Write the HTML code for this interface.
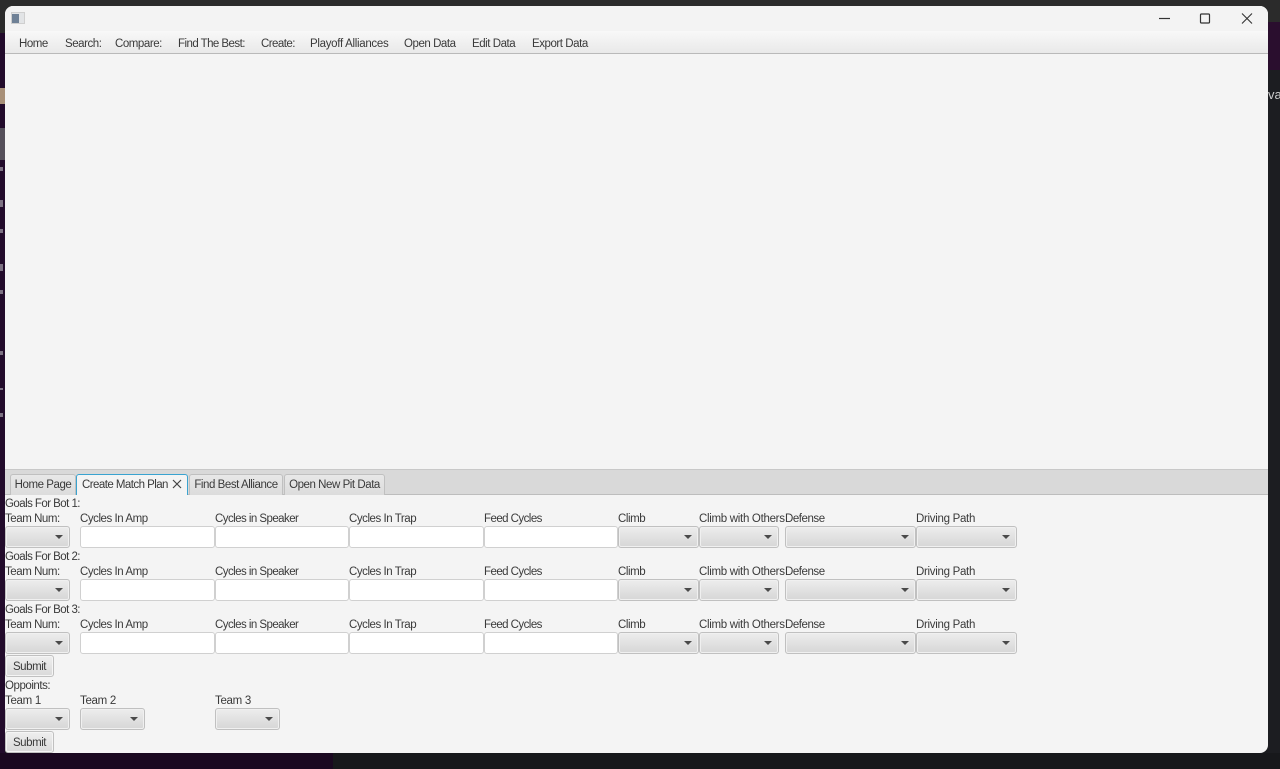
<!DOCTYPE html>
<html><head><meta charset="utf-8"><style>
html,body{margin:0;padding:0;width:1280px;height:769px;overflow:hidden;background:#1b1c20;font-family:"Liberation Sans",sans-serif;font-size:11.5px;letter-spacing:-.45px;color:#3a3a3a}
div{position:absolute;box-sizing:border-box}
.t{white-space:nowrap;line-height:14px;height:14px;margin-top:1px}
.w{letter-spacing:-.3px}
.n{letter-spacing:-.55px}
.c{height:22px;border:1px solid #c0c0c0;border-radius:3px;background:linear-gradient(#ededed,#d6d6d6);box-shadow:inset 0 0 0 1px #f0f0f0}
.c:after{content:"";position:absolute;right:6px;top:8px;border-left:4px solid transparent;border-right:4px solid transparent;border-top:4px solid #4a4a4a}
.f{height:22px;border:1px solid #d0d0d0;border-radius:3px;background:#fff}
.b{height:22px;border:1px solid #c0c0c0;border-radius:3px;background:linear-gradient(#efefef,#d9d9d9);box-shadow:inset 0 0 0 1px #f5f5f5;text-align:center;line-height:22px;width:49px;left:5px}
.tab{top:474px;height:21px;border:1px solid #c0c0c0;border-bottom:none;border-radius:3px 3px 0 0;background:linear-gradient(#e8e8e8,#dcdcdc);line-height:21px;text-align:center;white-space:nowrap}
.s{left:0;width:3px;height:4px;background:#7d7283}
</style></head><body>
<div style="left:0;top:0;width:1280px;height:33px;background:#2b2b2b"></div>
<div style="left:0;top:33px;width:5px;height:736px;background:#220b2b"></div>
<div style="left:0;top:88px;width:5px;height:16px;background:#a89078"></div>
<div style="left:0;top:128px;width:5px;height:32px;background:#55505a"></div>
<div class="s" style="top:167px"></div>
<div class="s" style="top:200px;height:7px"></div>
<div class="s" style="top:229px"></div>
<div class="s" style="top:264px;height:7px"></div>
<div class="s" style="top:290px"></div>
<div class="s" style="top:351px"></div>
<div class="s" style="top:388px;height:2px"></div>
<div class="s" style="top:413px"></div>
<div style="left:1268px;top:22px;width:12px;height:48px;background:#2a0e2e"></div>
<div style="left:1268px;top:70px;width:12px;height:699px;background:#1c1d21"></div>
<div class="t" style="left:1268px;top:87px;color:#ccc;font-size:13px;letter-spacing:0">va</div>
<div style="left:0;top:753px;width:333px;height:16px;background:#1a0820"></div>
<div style="left:333px;top:753px;width:947px;height:16px;background:#17181b"></div>

<div style="left:5px;top:6px;width:1263px;height:747px;background:#f4f4f4;border-radius:8px;overflow:hidden">
<div style="left:0;top:0;width:1263px;height:25px;background:#f3f3f3"></div>
<div style="left:0;top:25px;width:1263px;height:23px;background:linear-gradient(#f8f8f8,#e9e9e9);border-bottom:1px solid #b9b9b9"></div>
<div style="left:0;top:463px;width:1263px;height:26px;background:#d9d9d9;border-top:1px solid #c8c8c8;border-bottom:1px solid #bdbdbd"></div>
</div>

<div style="left:11px;top:12px;width:14px;height:12px;background:#e2e4e6;border:1px solid #cfcfcf"></div>
<div style="left:12px;top:14px;width:7px;height:9px;background:#6f8196"></div>
<svg style="position:absolute;left:1150px;top:6px" width="118" height="25" fill="none" stroke="#333">
<path d="M9 12.5H20" stroke-width="1.2"/>
<rect x="50.5" y="8" width="9" height="9" rx="1" stroke-width="1.2"/>
<path d="M92 7.5L102 17.5M102 7.5L92 17.5" stroke-width="1.1"/>
</svg>

<div class="t" style="left:19px;top:36px">Home</div>
<div class="t" style="left:65px;top:36px">Search:</div>
<div class="t" style="left:115px;top:36px">Compare:</div>
<div class="t n" style="left:178px;top:36px">Find The Best:</div>
<div class="t n" style="left:261px;top:36px">Create:</div>
<div class="t w" style="left:310px;top:36px">Playoff Alliances</div>
<div class="t" style="left:404px;top:36px">Open Data</div>
<div class="t" style="left:472px;top:36px">Edit Data</div>
<div class="t" style="left:532px;top:36px">Export Data</div>

<div class="tab" style="left:10px;width:66px">Home Page</div>
<div class="tab n" style="left:76px;width:112px;background:#f4f4f4;border:1px solid #3aa3d0;border-bottom:none;text-align:left;padding-left:5px">Create Match Plan</div>
<svg style="position:absolute;left:172px;top:479px" width="10" height="10" fill="none" stroke="#444" stroke-width="1.2"><path d="M1 1L9 9M9 1L1 9"/></svg>
<div class="tab" style="left:189px;width:94px">Find Best Alliance</div>
<div class="tab" style="left:284px;width:101px">Open New Pit Data</div>

<div class="t n" style="left:5px;top:496px">Goals For Bot 1:</div>
<div class="t" style="left:5px;top:511px">Team Num:</div>
<div class="t" style="left:80px;top:511px">Cycles In Amp</div>
<div class="t n" style="left:215px;top:511px">Cycles in Speaker</div>
<div class="t" style="left:349px;top:511px">Cycles In Trap</div>
<div class="t n" style="left:484px;top:511px">Feed Cycles</div>
<div class="t" style="left:618px;top:511px">Climb</div>
<div class="t w" style="left:699px;top:511px">Climb with Others</div>
<div class="t" style="left:785px;top:511px">Defense</div>
<div class="t w" style="left:916px;top:511px">Driving Path</div>
<div class="c" style="left:5px;top:526px;width:65px"></div>
<div class="f" style="left:80px;top:526px;width:135px"></div>
<div class="f" style="left:215px;top:526px;width:134px"></div>
<div class="f" style="left:349px;top:526px;width:135px"></div>
<div class="f" style="left:484px;top:526px;width:134px"></div>
<div class="c" style="left:618px;top:526px;width:81px"></div>
<div class="c" style="left:699px;top:526px;width:80px"></div>
<div class="c" style="left:785px;top:526px;width:131px"></div>
<div class="c" style="left:916px;top:526px;width:101px"></div>

<div class="t n" style="left:5px;top:549px">Goals For Bot 2:</div>
<div class="t" style="left:5px;top:564px">Team Num:</div>
<div class="t" style="left:80px;top:564px">Cycles In Amp</div>
<div class="t n" style="left:215px;top:564px">Cycles in Speaker</div>
<div class="t" style="left:349px;top:564px">Cycles In Trap</div>
<div class="t n" style="left:484px;top:564px">Feed Cycles</div>
<div class="t" style="left:618px;top:564px">Climb</div>
<div class="t w" style="left:699px;top:564px">Climb with Others</div>
<div class="t" style="left:785px;top:564px">Defense</div>
<div class="t w" style="left:916px;top:564px">Driving Path</div>
<div class="c" style="left:5px;top:579px;width:65px"></div>
<div class="f" style="left:80px;top:579px;width:135px"></div>
<div class="f" style="left:215px;top:579px;width:134px"></div>
<div class="f" style="left:349px;top:579px;width:135px"></div>
<div class="f" style="left:484px;top:579px;width:134px"></div>
<div class="c" style="left:618px;top:579px;width:81px"></div>
<div class="c" style="left:699px;top:579px;width:80px"></div>
<div class="c" style="left:785px;top:579px;width:131px"></div>
<div class="c" style="left:916px;top:579px;width:101px"></div>

<div class="t n" style="left:5px;top:602px">Goals For Bot 3:</div>
<div class="t" style="left:5px;top:617px">Team Num:</div>
<div class="t" style="left:80px;top:617px">Cycles In Amp</div>
<div class="t n" style="left:215px;top:617px">Cycles in Speaker</div>
<div class="t" style="left:349px;top:617px">Cycles In Trap</div>
<div class="t n" style="left:484px;top:617px">Feed Cycles</div>
<div class="t" style="left:618px;top:617px">Climb</div>
<div class="t w" style="left:699px;top:617px">Climb with Others</div>
<div class="t" style="left:785px;top:617px">Defense</div>
<div class="t w" style="left:916px;top:617px">Driving Path</div>
<div class="c" style="left:5px;top:632px;width:65px"></div>
<div class="f" style="left:80px;top:632px;width:135px"></div>
<div class="f" style="left:215px;top:632px;width:134px"></div>
<div class="f" style="left:349px;top:632px;width:135px"></div>
<div class="f" style="left:484px;top:632px;width:134px"></div>
<div class="c" style="left:618px;top:632px;width:81px"></div>
<div class="c" style="left:699px;top:632px;width:80px"></div>
<div class="c" style="left:785px;top:632px;width:131px"></div>
<div class="c" style="left:916px;top:632px;width:101px"></div>

<div class="b" style="top:655px">Submit</div>
<div class="t" style="left:5px;top:678px">Oppoints:</div>
<div class="t w" style="left:5px;top:693px">Team 1</div>
<div class="t w" style="left:80px;top:693px">Team 2</div>
<div class="t w" style="left:215px;top:693px">Team 3</div>
<div class="c" style="left:5px;top:708px;width:65px"></div>
<div class="c" style="left:80px;top:708px;width:65px"></div>
<div class="c" style="left:215px;top:708px;width:65px"></div>
<div class="b" style="top:731px">Submit</div>
</body></html>
